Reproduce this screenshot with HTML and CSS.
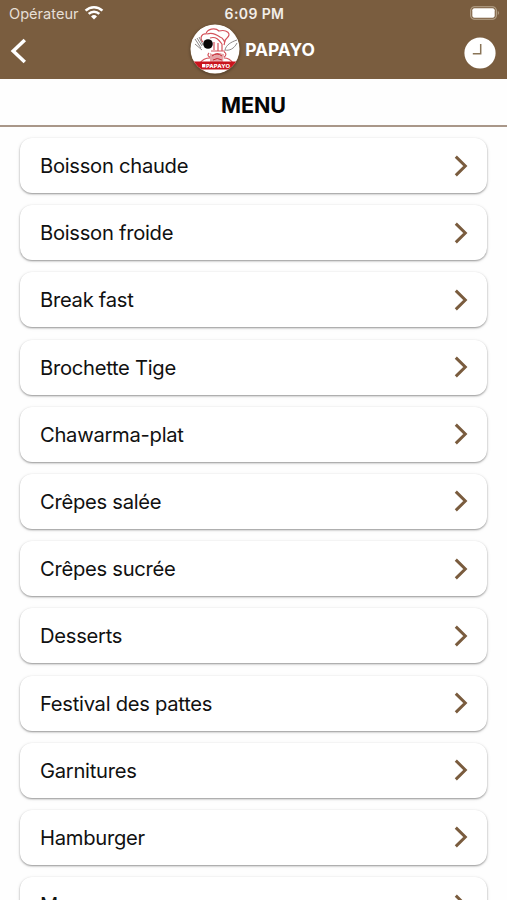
FILE: index.html
```
<!DOCTYPE html>
<html lang="fr">
<head>
    <meta charset="UTF-8">
    <meta name="viewport" content="width=device-width, initial-scale=1.0">
    <title>PAPAYO - Menu</title>
    <link rel="stylesheet" href="styles.css">
</head>
<body>
    <header class="header">
        <div class="status-bar">
            <div class="carrier">
                <span>Opérateur</span>
                <svg class="wifi" viewBox="0 0 20 15" width="20" height="15">
                    <path d="M1.6 5.6a12 12 0 0 1 16.8 0M4.7 8.9a7.5 7.5 0 0 1 10.6 0" fill="none" stroke="#fff" stroke-width="2.5"/>
                    <path d="M10 14.4l-3-3a4.3 4.3 0 0 1 6 0z" fill="#fff"/>
                </svg>
            </div>
            <span class="time">6:09 PM</span>
            <svg class="battery" viewBox="0 0 30 14" width="30" height="14">
                <rect x=".7" y=".7" width="25.6" height="12.6" rx="3.8" fill="none" stroke="#baa890" stroke-width="1.1"/>
                <rect x="2.3" y="2.2" width="22.4" height="9.6" rx="2" fill="#fff"/>
                <path d="M27.8 4.8q2 2.2 0 4.4z" fill="#baa890"/>
            </svg>
        </div>
        <div class="nav-bar">
            <svg class="back" viewBox="0 0 18 28" width="18" height="28">
                <path d="M15.8 3L4.2 14l11.6 11" fill="none" stroke="#fff" stroke-width="3.5"/>
            </svg>
            <div class="brand">
                <svg class="logo" viewBox="0 0 50 50" width="50" height="50">
                    <defs>
                        <clipPath id="disc"><circle cx="25" cy="25" r="24.5"/></clipPath>
                    </defs>
                    <circle cx="25" cy="25" r="24.5" fill="#fff"/>
                    <g clip-path="url(#disc)">
                        <g fill="none" stroke="#d4535b" stroke-width="1.2">
                            <path d="M13 18c-4-4-1-9 3-8 1-5 9-7 13-3 8-2 13 3 8 7-3 2-2 5-3 7"/>
                            <path d="M17 10c5-2 9 0 13 3 4 1 3 4 5 5M20 14c6-2 9 2 12 6M24 18v8M28 19v8M32 20v7"/>
                            <path d="M21 27h14M19 29c-2 2-1 4 2 4M34 28c3 1 2 4 0 5M20 34c-5 0-8 2-10 5M34 34c4 0 7 2 9 5M23 31c3-2 7-2 9 0"/>
                        </g>
                        <path d="M20 29c4 3 9-1 14 1l-1 8H20z" fill="#e5a4a7"/>
                        <path d="M22 32q5-4 10 0M23 36q4-3 9 0" fill="none" stroke="#c52834" stroke-width="1"/>
                        <path d="M5 15l6 9M7 14l5 8M9 13l4 8M5 20l7 6" fill="none" stroke="#8a8585" stroke-width="1"/>
                        <path d="M35 26c1-5 6-8 12-10M35 26c4 1 9-1 12-7" fill="none" stroke="#8d8787" stroke-width="1"/>
                        <circle cx="18" cy="20" r="4.8" fill="#080606"/>
                        <rect x="0" y="37.5" width="50" height="8" fill="#c9141d"/>
                        <rect x="12" y="40" width="3.4" height="3.4" fill="#fff"/>
                        <text class="logo-text" x="16" y="43.9" textLength="24" lengthAdjust="spacingAndGlyphs">PAPAYO</text>
                    </g>
                </svg>
                <span class="brand-name">PAPAYO</span>
            </div>
            <svg class="clock" viewBox="0 0 32 32" width="32" height="32">
                <circle cx="16" cy="16" r="15.6" fill="#fff"/>
                <path d="M16.7 7v9.8H8.8" fill="none" stroke="#897457" stroke-width="1.5"/>
            </svg>
        </div>
    </header>

    <h1 class="title">MENU</h1>

    <ul class="menu" id="menu"></ul>

    <script>
        const categories = [
            'Boisson chaude',
            'Boisson froide',
            'Break fast',
            'Brochette Tige',
            'Chawarma-plat',
            'Crêpes salée',
            'Crêpes sucrée',
            'Desserts',
            'Festival des pattes',
            'Garnitures',
            'Hamburger',
            'Menus'
        ];

        // One card per category
        document.getElementById('menu').innerHTML = categories.map(name => `
            <li class="menu-item">
                <span>${name}</span>
                <svg class="chevron" viewBox="0 0 14 22" width="14" height="22">
                    <path d="M1.8 1.6L11.3 11l-9.5 9.4" fill="none" stroke="#7a5c3e" stroke-width="3"/>
                </svg>
            </li>`).join('');
    </script>
</body>
</html>
```

FILE: styles.css
```
body {
    font-family: Inter, "Liberation Sans", sans-serif;
    background-color: #fefefe;
    color: #111;
    height: 900px;
    margin: 0;
    overflow: hidden;
}

.header {
    background-color: #7a5d3f;
    color: white;
    height: 79px;
    box-sizing: border-box;
}

.status-bar {
    display: grid;
    grid-template-columns: 1fr auto 1fr;
    align-items: center;
    height: 27px;
    padding: 0 7px 0 9px;
}

.carrier {
    display: flex;
    align-items: center;
    gap: 5px;
    font-size: 14.6px;
    color: #e6dfd6;
}

.wifi {
    margin-top: -2px;
}

.time {
    font-size: 14px;
    font-weight: 600;
    letter-spacing: 0.4px;
    color: #f2eee9;
}

.battery {
    justify-self: end;
    margin-top: -1px;
}

.nav-bar {
    display: grid;
    grid-template-columns: 1fr auto 1fr;
    align-items: center;
    height: 50px;
    padding: 0 11px 0 9px;
    margin-top: -3px;
}

.brand {
    display: flex;
    align-items: center;
    gap: 5px;
}

.back {
    margin-top: 3px;
}

.logo {
    border-radius: 50%;
    box-shadow: 0 1px 3px rgba(0, 0, 0, 0.35);
}

.logo-text {
    font-size: 5px;
    font-weight: 800;
    fill: white;
}

.brand-name {
    font-size: 17.4px;
    font-weight: 700;
}

.clock {
    justify-self: end;
    margin-top: 7px;
}

.title {
    height: 45px;
    margin: 0;
    padding-top: 1px;
    border-bottom: 2px solid #a99789;
    font-size: 21.5px;
    line-height: 51px;
    font-weight: 700;
    text-align: center;
    color: #050505;
}

.menu {
    display: flex;
    flex-direction: column;
    gap: 12.2px;
    list-style: none;
    margin: 0;
    padding: 11px 20px;
}

.menu-item {
    display: flex;
    flex-shrink: 0;
    align-items: center;
    justify-content: space-between;
    height: 55px;
    box-sizing: border-box;
    padding: 0 19px 0 20px;
    background-color: white;
    border-radius: 12px;
    box-shadow: 0 1px 2px rgba(0, 0, 0, 0.38), 0 1px 4px rgba(0, 0, 0, 0.08);
    font-size: 20.2px;
    letter-spacing: -0.28px;
}
```
